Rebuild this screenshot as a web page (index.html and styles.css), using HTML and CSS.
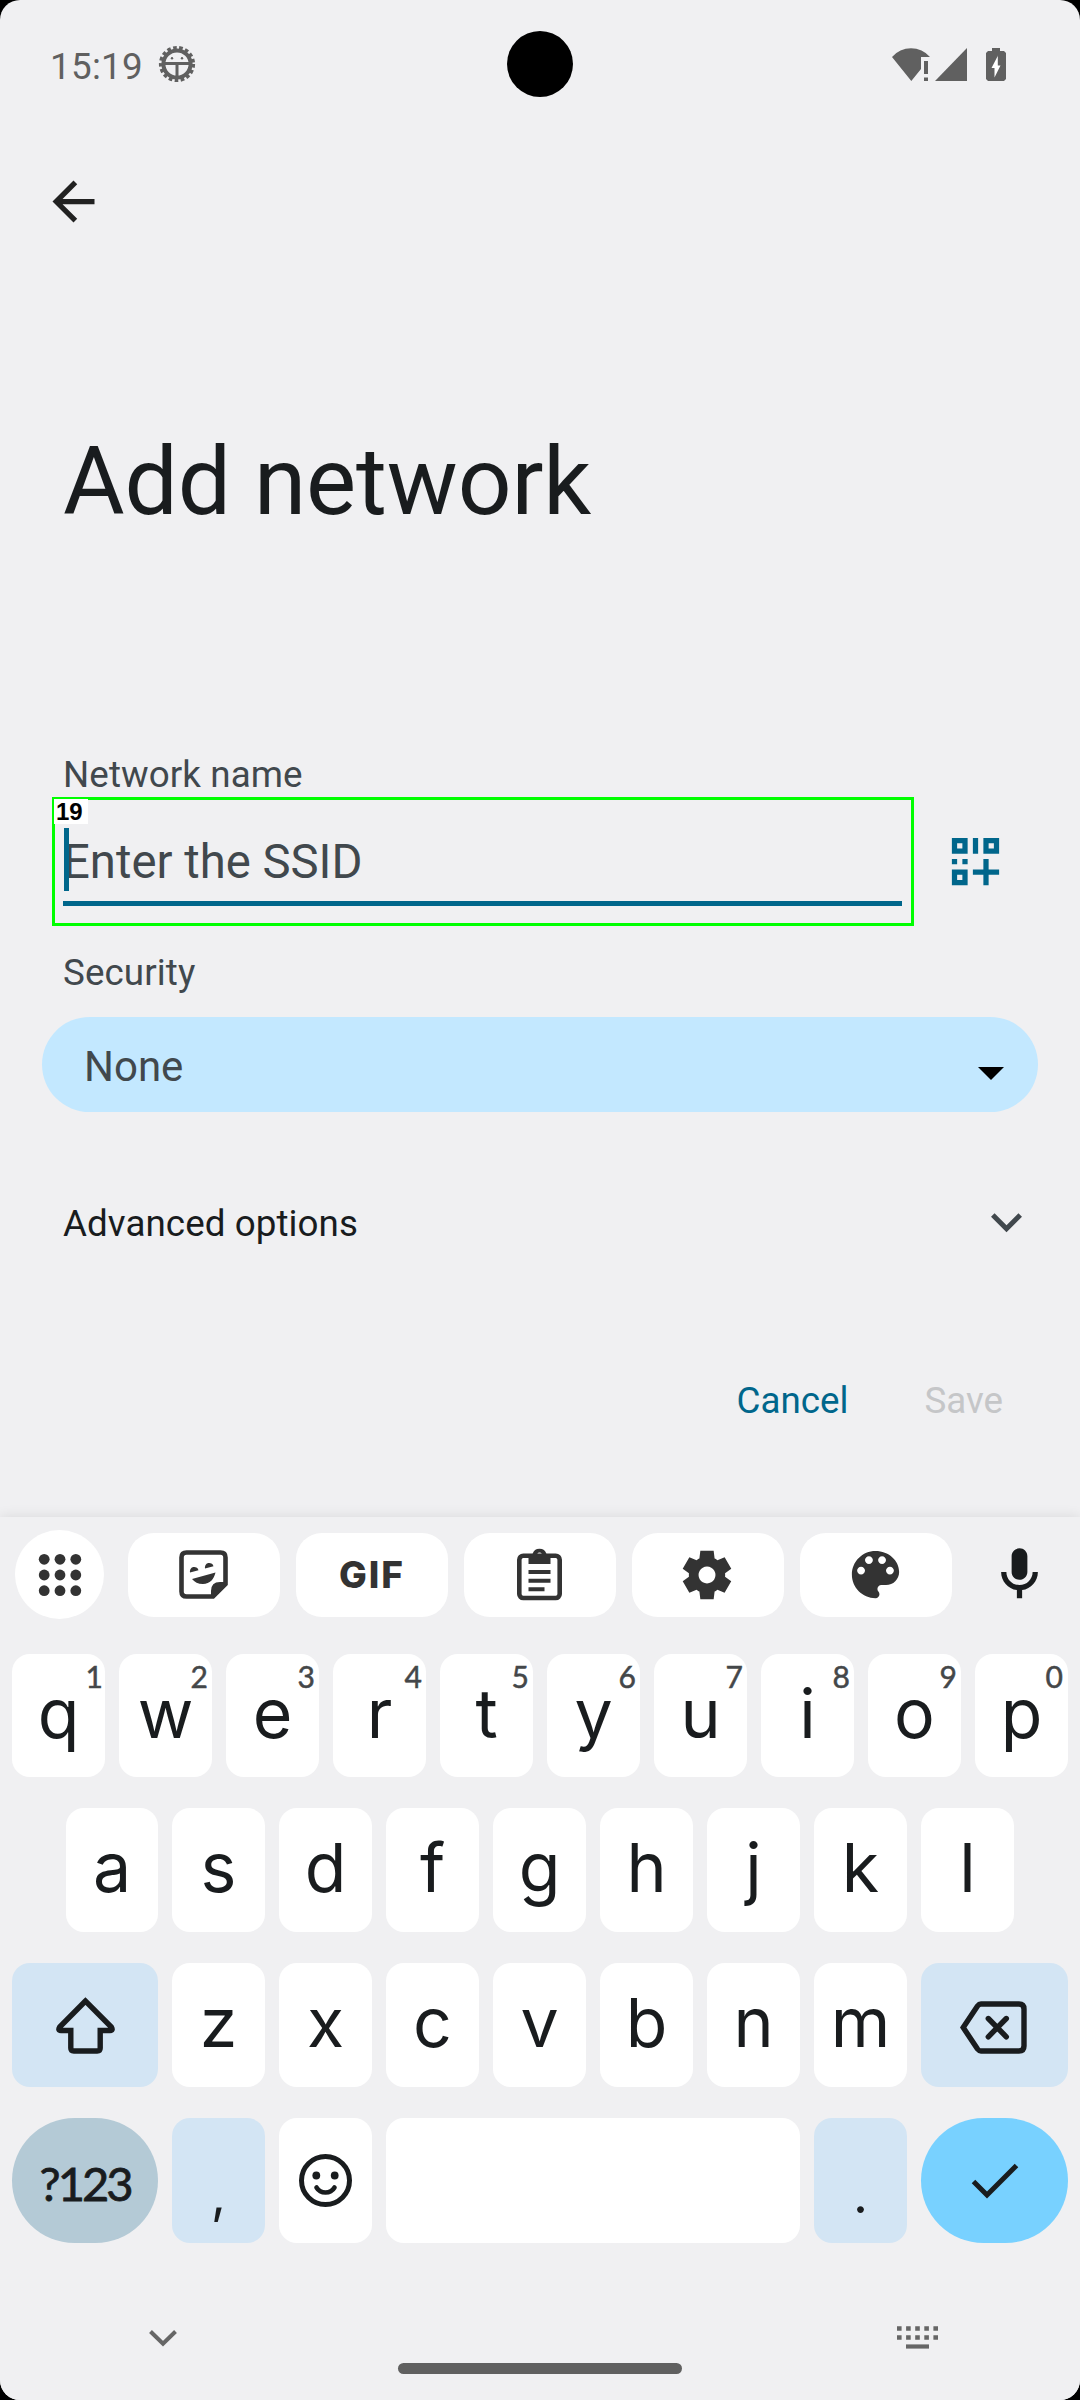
FILE: index.html
```html
<!DOCTYPE html>
<html lang="en">
<head>
<meta charset="utf-8">
<title>Add network</title>
<link rel="stylesheet" href="styles.css">
</head>
<body>
<div class="screen">
  <div class="camera"></div>
  <header class="status">
    <span class="time">15:19</span>
    <svg class="debug" width="38" height="38" viewBox="-19 -19 38 38"><circle r="13.6" fill="none" stroke="#606060" stroke-width="4"/><circle r="16.2" fill="none" stroke="#606060" stroke-width="3.8" stroke-dasharray="3.6 2.4"/><path d="M-13-.6H13M0 0V13" stroke="#606060" stroke-width="3"/><circle cx="-5" cy="-5.8" r="1.2" fill="#606060"/><circle cx="5" cy="-5.8" r="1.2" fill="#606060"/></svg>
    <svg class="wifi" width="39" height="33" viewBox="0 0 39 33"><path fill="#606060" d="M0 9A25 25 0 0 1 38 9H29V21L19.3 33ZM32 13h4v13h-4zM32 29.5h4V33h-4z"/></svg>
    <svg class="signal" width="32" height="33" viewBox="0 0 32 33"><path fill="#606060" d="M0 33L32 0V33Z"/></svg>
    <svg class="battery" width="20" height="33" viewBox="0 0 20 33"><path fill="#606060" d="M6 0h8v3h4l2 2V31l-2 2H2l-2-2V5l2-2h4z"/><path fill="#fff" d="M12 7.500L5.500 20H8.500V29.500L14.500 17.500H11.800V7.500z"/></svg>
  </header>
  <div class="appbar"><svg width="63" height="63" viewBox="0 0 24 24"><path fill="#212121" d="M20 11H7.830l5.590-5.590L12 4l-8 8 8 8 1.410-1.410L7.830 13H20v-2z"/></svg></div>
  <h1 class="title">Add network</h1>
  <main class="form">
    <label class="label">Network name</label>
    <div class="ssid-row">
      <div class="field">
        <span class="tag">19</span>
        <span class="caret"></span>
        <div class="hint">Enter the SSID</div>
      </div>
      <svg class="qr" width="63" height="63" viewBox="0 0 24 24"><path fill="#00668b" fill-rule="evenodd" d="M3 3h6v6H3zM5 5v2h2V5zM11 3h2v6h-2zM15 3h6v6h-6zM17 5v2h2V5zM3 11h2v2H3zM7 11h2v2H7zM3 15h6v6H3zM5 17v2h2v-2zM15 11h2v4h4v2h-4v4h-2v-4h-4v-2h4z"/></svg>
    </div>
    <label class="label security">Security</label>
    <div class="spinner"><span>None</span><svg width="26" height="13" viewBox="0 0 26 13"><path d="M0 0H26L13 13Z"/></svg></div>
    <div class="advanced"><span>Advanced options</span><svg width="31" height="20" viewBox="0 0 31 20"><path fill="none" stroke="#41484d" stroke-width="5" d="M1.800 2L15.500 15.800 29.200 2"/></svg></div>
    <div class="actions"><span class="cancel">Cancel</span><span class="save">Save</span></div>
  </main>
  <section class="keyboard">
    <div class="tools">
      <div class="apps"><svg width="44" height="44" viewBox="-22 -22 44 44" fill="#333"><circle cx="-15.800" cy="-15.700" r="5.400"/><circle cy="-15.700" r="5.400"/><circle cx="15.800" cy="-15.700" r="5.400"/><circle cx="-15.800" r="5.400"/><circle r="5.400"/><circle cx="15.800" r="5.400"/><circle cx="-15.800" cy="15.700" r="5.400"/><circle cy="15.700" r="5.400"/><circle cx="15.800" cy="15.700" r="5.400"/></svg></div>
      <div class="tool"><svg width="49" height="49" viewBox="0 0 49 49"><path fill="none" stroke="#333" stroke-width="4.600" d="M7.500 2.500H41.500Q46.500 2.500 46.500 7.500V34L34 46.500H7.500Q2.500 46.500 2.500 41.500V7.500Q2.500 2.500 7.500 2.500Z"/><path fill="#333" d="M32 47V41Q32 32 41 32H48V34L35 48ZM11 22.500A4.300 4.300 0 1 1 19.500 20.200ZM26 18.500A4.300 4.300 0 1 1 34.500 16.200ZM13 29L36.500 22.500C35 29 31 34 24 34C19 34 15.500 32 13 29Z"/></svg></div>
      <div class="tool gif">GIF</div>
      <div class="tool"><svg width="45" height="53" viewBox="0 0 45 53"><rect x="2.300" y="7.800" width="40.400" height="42.200" rx="4" fill="none" stroke="#333" stroke-width="4.600"/><path fill="#333" fill-rule="evenodd" d="M11.500 6H15.500A7.300 7.300 0 0 1 29.500 6H33.500V16H11.500ZM22.500 4.500a2.700 2.700 0 1 0 .1 0ZM11.500 22H33.500v4H11.500zM11.500 30.800H33.500v4H11.500zM11.500 39.300H27.500v4H11.500z"/></svg></div>
      <div class="tool"><svg width="58" height="58" viewBox="0 0 24 24"><path fill="#333" fill-rule="evenodd" d="M9.250 22l-.4-3.200q-.325-.125-.612-.3-.288-.175-.563-.375L4.700 19.375l-2.750-4.750 2.575-1.950Q4.500 12.500 4.500 12.337v-.675q0-.162.025-.337L1.950 9.375l2.750-4.750 2.975 1.250q.275-.2.575-.375.3-.175.600-.3l.4-3.200h5.500l.4 3.200q.325.125.613.3.287.175.562.375l2.975-1.250 2.750 4.750-2.575 1.950q.025.175.025.337v.675q0 .163-.05.338l2.575 1.950-2.750 4.750-2.950-1.250q-.275.2-.575.375-.3.175-.6.3l-.4 3.200ZM12 8.500a3.500 3.500 0 1 0 .01 0Z"/></svg></div>
      <div class="tool"><svg width="63" height="63" viewBox="0 0 24 24"><path fill="#333" d="M12 3c-4.970 0-9 4.030-9 9s4.030 9 9 9c.83 0 1.500-.67 1.500-1.500 0-.39-.15-.74-.39-1.010-.23-.26-.38-.61-.38-.99 0-.83.67-1.500 1.500-1.500H16c2.760 0 5-2.240 5-5 0-4.420-4.030-8-9-8zm-5.500 9c-.83 0-1.500-.67-1.500-1.500S5.670 9 6.500 9 8 9.670 8 10.500 7.330 12 6.500 12zm3-4C8.670 8 8 7.330 8 6.500S8.670 5 9.500 5s1.500.67 1.500 1.500S10.330 8 9.500 8zm5 0c-.83 0-1.500-.67-1.500-1.500S13.670 5 14.500 5s1.500.67 1.500 1.500S15.330 8 14.500 8zm3 4c-.83 0-1.500-.67-1.500-1.500S16.670 9 17.500 9s1.500.67 1.500 1.500-.67 1.500-1.500 1.500z"/></svg></div>
      <svg class="mic" width="63" height="63" viewBox="0 0 24 24"><path fill="#191c1e" d="M12 14c1.660 0 3-1.340 3-3V5c0-1.660-1.340-3-3-3S9 3.340 9 5v6c0 1.660 1.340 3 3 3zm5-3c0 2.760-2.240 5-5 5s-5-2.240-5-5H5c0 3.530 2.610 6.430 6 6.920V21h2v-3.080c3.390-.49 6-3.390 6-6.920h-2z"/></svg>
    </div>
    <div class="row row1">
      <div class="key">q<i>1</i></div><div class="key">w<i>2</i></div><div class="key">e<i>3</i></div><div class="key">r<i>4</i></div><div class="key">t<i>5</i></div><div class="key">y<i>6</i></div><div class="key">u<i>7</i></div><div class="key">i<i>8</i></div><div class="key">o<i>9</i></div><div class="key">p<i>0</i></div>
    </div>
    <div class="row row2">
      <div class="key">a</div><div class="key">s</div><div class="key">d</div><div class="key">f</div><div class="key">g</div><div class="key">h</div><div class="key">j</div><div class="key">k</div><div class="key">l</div>
    </div>
    <div class="row row3">
      <div class="key fn shift"><svg width="59" height="57" viewBox="0 0 59 57"><path fill="none" stroke="#191c1e" stroke-width="5.400" d="M29.500 4L3.700 30Q1.500 33.500 5 33.500H14.800V51Q14.800 54 17.800 54H41.200Q44.200 54 44.200 51V33.500H54Q57.500 33.500 55.300 30Z"/></svg></div><div class="key">z</div><div class="key">x</div><div class="key">c</div><div class="key">v</div><div class="key">b</div><div class="key">n</div><div class="key">m</div><div class="key fn back"><svg width="67" height="53" viewBox="0 0 67 53" fill="none" stroke="#191c1e" stroke-width="5.400"><path d="M3.200 26.500L17.500 5Q19 3 21 3H59Q64 3 64 8V45Q64 50 59 50H21Q19 50 17.500 48Z"/><path stroke-linecap="round" d="M28.300 17.500L46.300 35.800M46.300 17.500L28.300 35.800"/></svg></div>
    </div>
    <div class="row row4">
      <div class="key sym">?123</div>
      <div class="key fn punct">,</div>
      <div class="key emoji"><svg width="53" height="53" viewBox="0 0 53 53"><circle cx="26.500" cy="26.500" r="24" fill="none" stroke="#191c1e" stroke-width="5"/><circle cx="17.300" cy="21.500" r="3.900" fill="#191c1e"/><circle cx="35.700" cy="21.500" r="3.900" fill="#191c1e"/><path d="M17.500 33.500Q20.500 38.500 26.500 38.500T35.500 33.500" fill="none" stroke="#191c1e" stroke-width="4.600" stroke-linecap="round"/></svg></div>
      <div class="key space"></div>
      <div class="key fn punct">.</div>
      <div class="key enter"><svg width="48" height="36" viewBox="0 0 48 36"><path fill="none" stroke="#191c1e" stroke-width="5" d="M2.500 18.500L16 32 45.500 2.500"/></svg></div>
    </div>
    <div class="nav">
      <svg class="hide" width="28" height="17" viewBox="0 0 28 17"><path fill="none" stroke="#666" stroke-width="4" d="M1.500 1.500L14 13.800 26.500 1.500"/></svg>
      <svg class="ime" width="41" height="23" viewBox="0 0 41 23" fill="none" stroke="#666"><path stroke-width="4.600" stroke-dasharray="4.600 4.500" d="M0 2.500H41M0 11.500H41"/><path stroke-width="4.200" d="M9 20.500H32"/></svg>
      <div class="home"></div>
    </div>
  </section>
</div>
</body>
</html>
```

FILE: styles.css
```css
* { box-sizing: border-box; }
body { margin: 0; background: #000; }
svg { display: block; flex: none; }
.screen { position: relative; width: 1080px; height: 2400px; display: flex; flex-direction: column; overflow: hidden; border-radius: 20px; background: #f0f0f2; font-family: Roboto, sans-serif; font-size: 36.75px; line-height: 45px; color: #191c1e; }
.camera { position: absolute; left: 507px; top: 31px; width: 66px; height: 66px; border-radius: 50%; background: #000; }
.status { height: 128px; flex: none; display: flex; align-items: center; padding: 0 74px 0 50px; color: #606060; }
.time { width: 108px; padding-top: 4px; letter-spacing: .3px; }
.wifi { margin-left: auto; margin-right: 4px; }
.signal { margin-right: 19px; }
.appbar { height: 147px; flex: none; padding: 42px 0 0 42px; }
.title { margin: 151px 0 0 63px; height: 111px; flex: none; font-size: 94.5px; line-height: 111px; font-weight: 400; letter-spacing: -.15px; }
.form { height: 980px; flex: none; display: flex; flex-direction: column; padding-top: 215px; }
.label { height: 45px; padding-left: 63px; color: #41484d; letter-spacing: .1px; }
.ssid-row { display: flex; align-items: center; gap: 30px; padding-left: 52px; }
.field { position: relative; width: 862px; height: 129px; padding: 0 9px 0 8px; border: 3px solid #0f0; }
.hint { height: 106px; padding-top: 35px; border-bottom: 5px solid #00668b; color: #41484d; font-size: 47.25px; line-height: 55px; }
.tag { position: absolute; left: -1px; top: -1px; width: 34px; height: 25px; padding-left: 2px; background: #fff; color: #000; font: bold 24px/26px "Liberation Sans", sans-serif; }
.caret { position: absolute; left: 9px; top: 28px; width: 5px; height: 63px; background: #00668b; }
.security { margin-top: 24px; }
.spinner { display: flex; align-items: center; justify-content: space-between; height: 95px; margin: 22px 42px 0; padding: 0 34px 0 42px; border-radius: 48px; background: #c3e8ff; color: #41484d; font-size: 42px; }
.spinner span { padding-top: 3px; }
.spinner svg { margin-top: 18px; }
.advanced { display: flex; align-items: center; justify-content: space-between; height: 45px; margin-top: 89px; padding: 0 58px 0 63px; letter-spacing: .07px; }
.advanced svg { margin-bottom: 2px; }
.actions { display: flex; justify-content: flex-end; gap: 76px; height: 45px; margin-top: 132px; padding-right: 77px; }
.cancel { color: #00668b; }
.save { color: #c5c6c8; }
.keyboard { height: 883px; margin-top: auto; flex: none; position: relative; background: #f0f0f2; box-shadow: 0 -1px 12px rgba(0,0,0,.09); font-family: Inter, sans-serif; }
.tools { display: flex; align-items: center; gap: 16px; height: 115px; padding-left: 15px; }
.apps { width: 89px; height: 89px; margin-right: 8px; border-radius: 50%; display: grid; place-items: center; background: #fff; }
.tool { width: 152px; height: 84px; padding-right: 2px; border-radius: 26px; display: flex; align-items: center; justify-content: center; background: #fff; }
.gif { font-size: 37px; font-weight: 800; color: #333; letter-spacing: 2px; padding: 0; }
.mic { margin-left: 20px; }
.row { display: flex; justify-content: center; gap: 14px; height: 124px; margin-bottom: 31px; }
.row1 { margin-top: 22px; height: 123px; }
.row2 .key:first-child { width: 92px; }
.row4 { height: 125px; margin-bottom: 0; }
.key { position: relative; width: 93px; padding-bottom: 6px; border-radius: 18px; display: flex; align-items: center; justify-content: center; background: #fff; font-size: 68px; line-height: 118px; }
.key i { position: absolute; right: 4px; top: 4px; font: 400 30px/36px Lato, sans-serif; color: #444749; -webkit-text-stroke: .5px #444749; }
.row1 .key:first-child i { right: 2px; }
.row1 .key:last-child i { right: 5px; }
.fn { background: #d3e5f4; }
.shift { width: 146px; padding-bottom: 0; }
.back { width: 147px; padding: 5px 2px 0 0; }
.sym { width: 146px; border-radius: 63px; background: #b4cad6; font: 400 47px/60px Lato, sans-serif; letter-spacing: -3px; -webkit-text-stroke: .8px #191c1e; padding: 4px 0 0; }
.punct { font-size: 52px; padding: 28px 0 0; }
.emoji { padding: 0; }
.space { width: 414px; }
.enter { width: 147px; padding: 0; border-radius: 63px; background: #78d1ff; }
.nav { position: relative; height: 157px; }
.hide { position: absolute; left: 149px; top: 87px; }
.ime { position: absolute; left: 897px; top: 83px; }
.home { position: absolute; left: 398px; top: 120px; width: 284px; height: 11px; border-radius: 6px; background: #606060; }
```
